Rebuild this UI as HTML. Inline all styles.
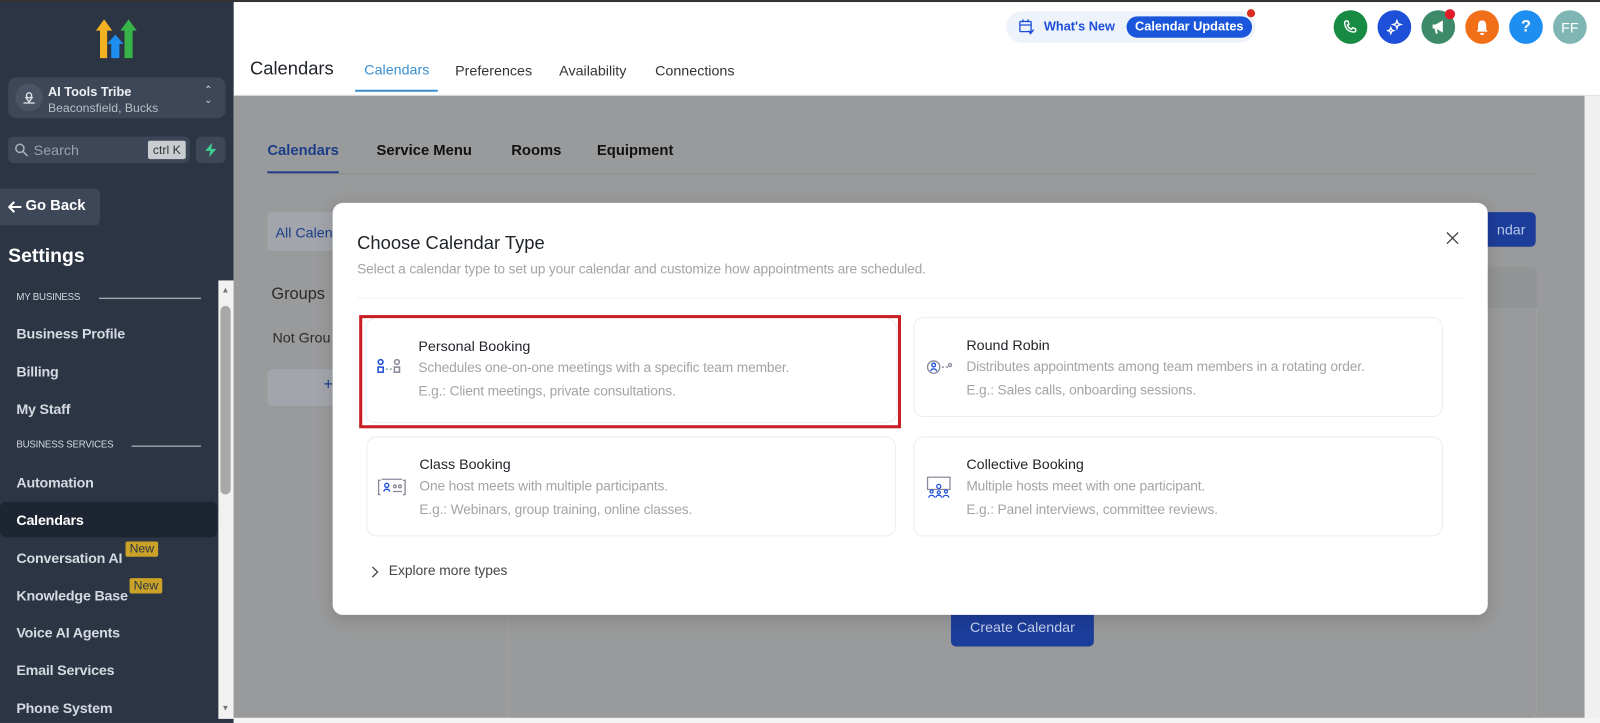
<!DOCTYPE html>
<html><head><meta charset="utf-8"><style>
*{box-sizing:border-box;margin:0;padding:0}
html,body{width:1600px;height:723px;overflow:hidden;background:#fff;font-family:"Liberation Sans",sans-serif}
#w{position:absolute;left:0;top:0;width:1568px;height:709px;transform:scale(1.0204,1.0197);transform-origin:0 0}
.a{position:absolute}
.sb{left:0;top:0;width:229px;height:709px;background:#2c3544}
.it{position:absolute;left:16px;font-size:14px;font-weight:bold;color:#d5d9e0;letter-spacing:-.2px}
.sec{position:absolute;left:16px;font-size:9.5px;color:#d5d9e0;letter-spacing:-.2px}
.new{position:absolute;background:#c9a227;color:#2c3544;font-size:12px;padding:0 4px;height:15px;line-height:15px;border-radius:2px}
.circ{position:absolute;top:10px;width:33px;height:33px;border-radius:50%;display:flex;align-items:center;justify-content:center;color:#fff;font-weight:bold;font-size:14px}
.card{position:absolute;background:#fff;border:1px solid #eceef1;border-radius:10px}
.ct{position:absolute;left:51px;font-size:14px;color:#1f2328}
.cd{position:absolute;left:51px;font-size:13.5px;color:#a2a4a8;letter-spacing:-.15px}
.ic{position:absolute;left:10px;top:38px}
</style></head><body><div id="w">
<!-- sidebar -->
<div class="a sb"></div>
<div class="a" style="left:0;top:0;width:1568px;height:2px;background:#333"></div>
<svg class="a" style="left:93px;top:17px" width="44" height="42" viewBox="0 0 44 42">
<path d="M5 40V13H1L9 2 17 13H12V40Z" fill="#f4b223"/>
<path d="M16 40V26H12L20 17 28 26H24V40Z" fill="#1f8ef1"/>
<path d="M29 40V13H25L33 2 41 13H37V40Z" fill="#37b34a"/>
</svg>
<div class="a" style="left:8px;top:76px;width:213px;height:40px;background:#3e4757;border-radius:8px"></div>
<div class="a" style="left:15px;top:82px;width:27px;height:27px;border-radius:50%;background:#4b5464"></div>
<svg class="a" style="left:21px;top:88px" width="15" height="15" viewBox="0 0 15 15" fill="none" stroke="#e5e7eb" stroke-width="1.3"><circle cx="7.5" cy="5.5" r="2.5"/><path d="M7.5 12 L4 7 M7.5 12 L11 7 M2 13h11"/></svg>
<div class="a" style="left:47px;top:83px;font-size:12.5px;font-weight:bold;color:#eef0f3">AI Tools Tribe</div>
<div class="a" style="left:47px;top:99px;font-size:12px;color:#b9bec7">Beaconsfield, Bucks</div>
<div class="a" style="left:200px;top:84px;color:#cfd3da;font-size:10px;line-height:10px">&#8963;<br>&#8964;</div>
<div class="a" style="left:8px;top:134px;width:178px;height:26px;background:#3e4757;border-radius:5px"></div>
<svg class="a" style="left:14px;top:140px" width="14" height="14" viewBox="0 0 14 14" fill="none" stroke="#aab0ba" stroke-width="1.5"><circle cx="5.5" cy="5.5" r="4"/><path d="M8.5 8.5 13 13"/></svg>
<div class="a" style="left:33px;top:139px;font-size:14px;color:#9aa1ac">Search</div>
<div class="a" style="left:145px;top:138px;width:37px;height:18px;background:#c9ccd1;border-radius:2px;font-size:12px;color:#333;text-align:center;line-height:18px">ctrl K</div>
<div class="a" style="left:192px;top:134px;width:29px;height:26px;background:#3e4757;border-radius:5px"></div>
<svg class="a" style="left:200px;top:140px" width="13" height="14" viewBox="0 0 13 14"><path d="M8 0 1 8h5l-1 6 7-8H7z" fill="#3ecf8e"/></svg>
<div class="a" style="left:0;top:185px;width:98px;height:36px;background:#3e4757;border-radius:0 5px 5px 0"></div>
<svg class="a" style="left:8px;top:197px" width="14" height="12" viewBox="0 0 14 12" fill="none" stroke="#fff" stroke-width="2"><path d="M13 6H2M6 1 1 6l5 5"/></svg>
<div class="a" style="left:25px;top:194px;font-size:14.5px;font-weight:bold;color:#fff">Go Back</div>
<div class="a" style="left:8px;top:241px;font-size:19px;font-weight:bold;color:#fff">Settings</div>
<div class="sec" style="top:286px">MY BUSINESS</div><div class="a" style="left:97px;top:292px;width:100px;height:1px;background:#c8ccd3"></div>
<div class="it" style="top:319px">Business Profile</div>
<div class="it" style="top:356px">Billing</div>
<div class="it" style="top:393px">My Staff</div>
<div class="sec" style="top:431px">BUSINESS SERVICES</div><div class="a" style="left:129px;top:437px;width:68px;height:1px;background:#c8ccd3"></div>
<div class="it" style="top:465px">Automation</div>
<div class="a" style="left:0;top:492px;width:213px;height:35px;background:#1d2432;border-radius:6px"></div>
<div class="it" style="top:502px;color:#fff">Calendars</div>
<div class="it" style="top:539px">Conversation AI</div><div class="new" style="left:123px;top:531px">New</div>
<div class="it" style="top:576px">Knowledge Base</div><div class="new" style="left:127px;top:567px">New</div>
<div class="it" style="top:612px">Voice AI Agents</div>
<div class="it" style="top:649px">Email Services</div>
<div class="it" style="top:686px">Phone System</div>
<div class="a" style="left:214px;top:275px;width:15px;height:430px;background:#f1f1f1"></div>
<div class="a" style="left:216px;top:300px;width:10px;height:185px;background:#a8a8a8;border-radius:5px"></div>
<div class="a" style="left:217px;top:280px;font-size:8px;color:#777">&#9650;</div>
<div class="a" style="left:217px;top:690px;font-size:8px;color:#777">&#9660;</div>
<!-- header -->
<div class="a" style="left:245px;top:57px;font-size:18px;color:#1f2328">Calendars</div>
<div class="a" style="left:357px;top:60px;font-size:14px;color:#3b8fd0">Calendars</div>
<div class="a" style="left:348px;top:88px;width:81px;height:2px;background:#3b8fd0"></div>
<div class="a" style="left:446px;top:61px;font-size:14px;color:#333">Preferences</div>
<div class="a" style="left:548px;top:61px;font-size:14px;color:#333">Availability</div>
<div class="a" style="left:642px;top:61px;font-size:14px;color:#333">Connections</div>
<div class="a" style="left:986px;top:11px;width:244px;height:31px;background:#eef3fb;border-radius:16px"></div>
<svg class="a" style="left:998px;top:18px" width="17" height="17" viewBox="0 0 17 17" fill="none" stroke="#1d4ed8" stroke-width="1.3"><rect x="1.5" y="3" width="11" height="10" rx="1"/><path d="M1.5 6.5h11M4.5 1v3M9.5 1v3M10 12l2 3 3-4"/></svg>
<div class="a" style="left:1023px;top:19px;font-size:12.5px;font-weight:bold;color:#1d4ed8">What's New</div>
<div class="a" style="left:1104px;top:16px;width:123px;height:21px;background:#1a56db;border-radius:11px;color:#fff;font-size:12.5px;font-weight:bold;text-align:center;line-height:21px">Calendar Updates</div>
<div class="a" style="left:1222px;top:9px;width:8px;height:8px;background:#d92d20;border-radius:50%"></div>
<div class="circ" style="left:1307px;background:#178a44"><svg width="15" height="15" viewBox="0 0 15 15" fill="none" stroke="#fff" stroke-width="1.4"><path d="M3 1.5l2 .2 1 3-1.5 1c.8 2 2 3.2 4 4l1-1.5 3 1 .2 2c-.5 1-1.5 1.3-2.5 1.2C5.5 12 2.5 9 1.8 4 1.7 3 2 2 3 1.5z"/></svg></div>
<div class="circ" style="left:1350px;background:#1d4fd8"><svg width="16" height="16" viewBox="0 0 16 16" fill="none" stroke="#fff" stroke-width="1.3"><path d="M10 1l1 3 3 1-3 1-1 3-1-3-3-1 3-1zM4 8l.8 2.2L7 11l-2.2.8L4 14l-.8-2.2L1 11l2.2-.8z"/></svg></div>
<div class="circ" style="left:1393px;background:#3d8a6a"><svg width="15" height="15" viewBox="0 0 15 15"><path d="M2 5h3l7-4v12L5 9H2zM4 9l1 5h2L6 9" fill="#fff"/></svg></div>
<div class="a" style="left:1416px;top:9px;width:10px;height:10px;background:#e11d2a;border-radius:50%"></div>
<div class="circ" style="left:1436px;background:#f26f1a"><svg width="15" height="16" viewBox="0 0 15 16"><path d="M7.5 1C4.5 1 3.5 3.5 3.5 6v4L2 12h11l-1.5-2V6c0-2.5-1-5-4-5zM5.5 13.5a2 2 0 004 0z" fill="#fff"/></svg></div>
<div class="circ" style="left:1479px;background:#1f8ef1;font-size:16px">?</div>
<div class="circ" style="left:1522px;background:#7fb6b4;font-weight:normal">FF</div>
<div class="a" style="left:229px;top:93px;width:1339px;height:1px;background:#ddd"></div>
<!-- overlay bg content -->
<div class="a" style="left:229px;top:94px;width:1324px;height:610px;background:#999a9b"></div>
<div class="a" style="left:1553px;top:94px;width:15px;height:615px;background:#f0f0f0"></div>
<div class="a" style="left:229px;top:704px;width:1339px;height:5px;background:#f4f4f4"></div>
<div class="a" style="left:262px;top:140px;font-size:14.5px;font-weight:bold;color:#1c3d8a">Calendars</div>
<div class="a" style="left:262px;top:168px;width:70px;height:2px;background:#1c3d8a"></div>
<div class="a" style="left:262px;top:170px;width:1244px;height:1px;background:#8d8e90"></div>
<div class="a" style="left:369px;top:140px;font-size:14.5px;font-weight:bold;color:#111">Service Menu</div>
<div class="a" style="left:501px;top:140px;font-size:14.5px;font-weight:bold;color:#111">Rooms</div>
<div class="a" style="left:585px;top:140px;font-size:14.5px;font-weight:bold;color:#111">Equipment</div>
<div class="a" style="left:262px;top:208px;width:80px;height:38px;background:#a2a5ab;border-radius:4px"></div>
<div class="a" style="left:270px;top:220px;font-size:14px;color:#1c3d8a">All Calen</div>
<div class="a" style="left:1430px;top:208px;width:75px;height:34px;background:#1c3d9a;border-radius:5px;color:#b8c6e8;font-size:14px;line-height:34px;text-align:right;padding-right:10px">ndar</div>
<div class="a" style="left:497px;top:262px;width:1009px;height:442px;border:1px solid #a3a4a6;border-radius:5px"></div>
<div class="a" style="left:497px;top:262px;width:1009px;height:40px;background:#939495;border-radius:5px 5px 0 0"></div>
<div class="a" style="left:266px;top:280px;font-size:16px;color:#2b2b2b">Groups</div>
<div class="a" style="left:267px;top:323px;font-size:14px;color:#2b2b2b">Not Grou</div>
<div class="a" style="left:262px;top:362px;width:80px;height:36px;background:#a2a5ab;border-radius:5px"></div>
<div class="a" style="left:317px;top:369px;font-size:16px;color:#1c3d8a">+</div>
<div class="a" style="left:932px;top:598px;width:140px;height:36px;background:#1c3d9a;border-radius:5px;color:#c6d1ea;font-size:14px;line-height:34px;text-align:center">Create Calendar</div>
<!-- modal -->
<div class="a" style="left:326px;top:199px;width:1132px;height:404px;background:#fff;border-radius:10px;box-shadow:0 4px 16px rgba(0,0,0,.15)"></div>
<div class="a" style="left:350px;top:228px;font-size:18px;color:#1f2328">Choose Calendar Type</div>
<div class="a" style="left:350px;top:256px;font-size:13.5px;color:#a2a4a8;letter-spacing:-.15px">Select a calendar type to set up your calendar and customize how appointments are scheduled.</div>
<svg class="a" style="left:1417px;top:227px" width="13" height="13" viewBox="0 0 13 13" stroke="#444" stroke-width="1.3"><path d="M1 1l11 11M12 1 1 12"/></svg>
<div class="a" style="left:350px;top:292px;width:1084px;height:1px;background:#eef0f2"></div>
<div class="a" style="left:352px;top:309px;width:531px;height:111px;border:3px solid #c81e24"></div>
<div class="card" style="left:358px;top:312px;width:521px;height:103px">
<svg class="ic" width="26" height="18" viewBox="0 0 26 18" fill="none" stroke="#1d4ed8" stroke-width="1.5"><circle cx="4" cy="4" r="2.3"/><rect x="1.5" y="9" width="5" height="5"/><path d="M9 11h2M13 11h2" stroke="#8aa"/><circle cx="20" cy="4" r="2.3" stroke="#889"/><rect x="17.5" y="9" width="5" height="5" stroke="#889"/></svg>
<div class="ct" style="top:18px">Personal Booking</div>
<div class="cd" style="top:40px">Schedules one-on-one meetings with a specific team member.</div>
<div class="cd" style="top:63px">E.g.: Client meetings, private consultations.</div></div>
<div class="card" style="left:895px;top:311px;width:519px;height:98px">
<svg class="ic" width="28" height="20" viewBox="0 0 28 20" fill="none" stroke="#1d4ed8" stroke-width="1.3"><circle cx="9" cy="10" r="6" stroke="#889"/><circle cx="9" cy="8" r="1.8"/><path d="M6 14c1-3 5-3 6 0"/><path d="M17 10h2M21 10h2" stroke="#889"/><circle cx="25" cy="8" r="1.5" stroke="#889"/></svg>
<div class="ct" style="top:18px">Round Robin</div>
<div class="cd" style="top:40px">Distributes appointments among team members in a rotating order.</div>
<div class="cd" style="top:63px">E.g.: Sales calls, onboarding sessions.</div></div>
<div class="card" style="left:359px;top:428px;width:519px;height:98px">
<svg class="ic" width="28" height="20" viewBox="0 0 28 20" fill="none" stroke="#889" stroke-width="1.3"><path d="M3 4H1v14h2M25 4h2v14h-2M4 3h20"/><circle cx="9" cy="9" r="2" stroke="#1d4ed8"/><path d="M6 15c1-3 5-3 6 0" stroke="#1d4ed8"/><circle cx="17" cy="10" r="1.4"/><circle cx="22" cy="10" r="1.4"/><path d="M15 15h9"/></svg>
<div class="ct" style="top:18px">Class Booking</div>
<div class="cd" style="top:40px">One host meets with multiple participants.</div>
<div class="cd" style="top:63px">E.g.: Webinars, group training, online classes.</div></div>
<div class="card" style="left:895px;top:428px;width:519px;height:98px">
<svg class="ic" width="28" height="22" viewBox="0 0 28 22" fill="none" stroke="#889" stroke-width="1.2"><rect x="3" y="1" width="22" height="12"/><circle cx="14" cy="10" r="2" stroke="#1d4ed8"/><circle cx="7" cy="15" r="1.5" stroke="#1d4ed8"/><circle cx="14" cy="16" r="1.5" stroke="#1d4ed8"/><circle cx="21" cy="15" r="1.5" stroke="#1d4ed8"/><path d="M4 21c1-3 5-3 6 0M11 21c1-3 5-3 6 0M18 21c1-3 5-3 6 0" stroke="#1d4ed8"/></svg>
<div class="ct" style="top:18px">Collective Booking</div>
<div class="cd" style="top:40px">Multiple hosts meet with one participant.</div>
<div class="cd" style="top:63px">E.g.: Panel interviews, committee reviews.</div></div>
<svg class="a" style="left:363px;top:555px" width="8" height="12" viewBox="0 0 8 12" fill="none" stroke="#444" stroke-width="1.3"><path d="M2 1l5 5-5 5"/></svg>
<div class="a" style="left:381px;top:552px;font-size:13.5px;color:#444">Explore more types</div>
</div></body></html>
